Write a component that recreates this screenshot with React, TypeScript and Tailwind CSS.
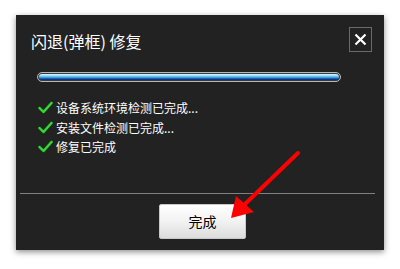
import React from "react";

const items = ["设备系统环境检测已完成...", "安装文件检测已完成...", "修复已完成"];

// 绿色对勾
const Check = () => (
  <svg width="15" height="13" viewBox="0 0 15 13" className="shrink-0">
    <path
      d="M1.5 7 L5.5 11 L13.5 2"
      fill="none"
      stroke="#0f3d0f"
      strokeWidth="4"
      strokeLinecap="round"
      strokeLinejoin="round"
    />
    <path
      d="M1.5 7 L5.5 11 L13.5 2"
      fill="none"
      stroke="#3fd23f"
      strokeWidth="2.4"
      strokeLinecap="round"
      strokeLinejoin="round"
    />
  </svg>
);

export default function App() {
  return (
    <div className="relative w-[400px] h-[269px] bg-white pt-[15px] pl-[16px] font-['Noto_Sans_CJK_SC',sans-serif]">
      <div className="w-[368px] h-[235px] bg-[#222222] shadow-[0_2px_6px_rgba(0,0,0,0.45)] flex flex-col">
        {/* 标题栏 */}
        <div className="flex items-center justify-between mt-[12px] pl-[15px] pr-[12px] h-[25px]">
          <span className="text-[16px] leading-[20px] text-white mt-[2px]">闪退(弹框) 修复</span>
          <div className="w-[23px] h-[25px] border border-[#6a6a6a] flex items-center justify-center">
            <svg width="13" height="13" viewBox="0 0 13 13">
              <path d="M1.5 1.5 L11.5 11.5 M11.5 1.5 L1.5 11.5" stroke="#fff" strokeWidth="2.2" />
            </svg>
          </div>
        </div>

        {/* 进度条 */}
        <div className="mt-[20px] ml-[21px] w-[304px] h-[10px] rounded-full border border-[#b8b8b8] p-[1px] bg-[#3a3a3a]">
          <div className="w-full h-full rounded-full bg-[linear-gradient(to_bottom,#e6f7fd_0%,#8fd8f5_30%,#3eaae6_55%,#1b5fb8_75%,#0a1f5c_100%)]" />
        </div>

        {/* 检测列表 */}
        <div className="mt-[16px] ml-[22px] flex flex-col">
          {items.map((t) => (
            <div key={t} className="flex items-center gap-[3px] h-[19.5px]">
              <Check />
              <span className="text-[12px] leading-[19px] text-white">{t}</span>
            </div>
          ))}
        </div>

        <div className="mt-[36px] ml-[4px] mr-[9px] h-px bg-[#808080]" />

        <button className="mt-[10px] ml-[143px] w-[87px] h-[35px] rounded-[2px] border border-[#c8c8c8] bg-[linear-gradient(to_bottom,#ffffff_0%,#f2f2f2_50%,#dcdcdc_100%)] text-[14px] text-black">
          完成
        </button>
      </div>

      {/* 红色箭头 */}
      <svg className="absolute left-0 top-0 pointer-events-none" width="400" height="269" viewBox="0 0 400 269">
        <line x1="298" y1="153" x2="244" y2="205" stroke="#ff0000" strokeWidth="4" strokeLinecap="round" />
        <polygon points="231,218 236,196 254,212" fill="#ff0000" />
      </svg>
    </div>
  );
}
